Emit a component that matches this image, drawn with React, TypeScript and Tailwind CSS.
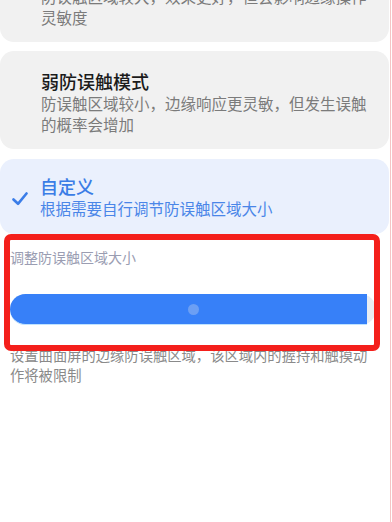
import { useState } from 'react';

const font = { fontFamily: '"Noto Sans CJK SC", "Noto Sans", sans-serif' };

function ModeCard({
  title,
  desc,
  className = '',
}: {
  title: string;
  desc: string;
  className?: string;
}) {
  return (
    <div className={`rounded-[14px] bg-[#f1f1f1] pl-[41px] pr-[20px] pt-[18px] pb-[14px] ${className}`}>
      <div className="text-[18px] leading-[24px] font-medium text-[#1b1b1b]">{title}</div>
      <div className="text-[15.5px] leading-[21px] text-[#7b7b7b]">{desc}</div>
    </div>
  );
}

export default function App() {
  const [value] = useState(97.6);

  return (
    <div className="relative flex h-[522px] w-[392px] overflow-hidden bg-white" style={font}>
      <div className="w-[390px]">
        <div className="-mt-[56px] w-[389px]">
          <ModeCard
            title="强防误触模式"
            desc="防误触区域较大，效果更好，但会影响边缘操作灵敏度"
            className="mb-[9px]"
          />
          <ModeCard
            title="弱防误触模式"
            desc="防误触区域较小，边缘响应更灵敏，但发生误触的概率会增加"
            className="mb-[10px]"
          />
          <div className="flex items-center rounded-[14px] bg-[#eaf0fd] py-[15px] pr-[20px]">
            <div className="flex w-[40px] shrink-0 pl-[12px] pt-[4px]">
              <svg width="16" height="14" viewBox="0 0 16 14" fill="none">
                <path d="M1.5 7.5 L6 11.8 L14.5 1.5" stroke="#3b7de8" strokeWidth="2.6" strokeLinecap="round" strokeLinejoin="round" />
              </svg>
            </div>
            <div>
              <div className="text-[18px] leading-[24px] font-medium text-[#3b7de6]">自定义</div>
              <div className="text-[15.5px] leading-[21px] text-[#4a86e8]">根据需要自行调节防误触区域大小</div>
            </div>
          </div>
        </div>

        <div className="px-[10px]">
          <div className="mt-[13px] text-[14px] leading-[20px] text-[#9a9db2]">调整防误触区域大小</div>
          <div className="relative mt-[27px] h-[31px] w-[366px] rounded-full bg-[#e9ecf1]">
            <div
              className="h-full rounded-l-full border-b border-[#bfe3ff] bg-[#3780f8]"
              style={{ width: `${value}%` }}
            />
            <span className="absolute left-[178px] top-[10px] h-[11px] w-[11px] rounded-full bg-[#6c9ff4]" />
          </div>
          <div className="mt-[20px] w-[360px] text-[14.3px] leading-[20px] text-[#8a8a8a]">
            设置曲面屏的边缘防误触区域，该区域内的握持和触摸动作将被限制
          </div>
        </div>
      </div>
      <div className="w-px bg-[#f5c5c5]" />

      <div className="pointer-events-none absolute left-[4px] top-[234px] h-[117px] w-[376px] rounded-[7px] border-[6px] border-[#f41f1b]" />
    </div>
  );
}
